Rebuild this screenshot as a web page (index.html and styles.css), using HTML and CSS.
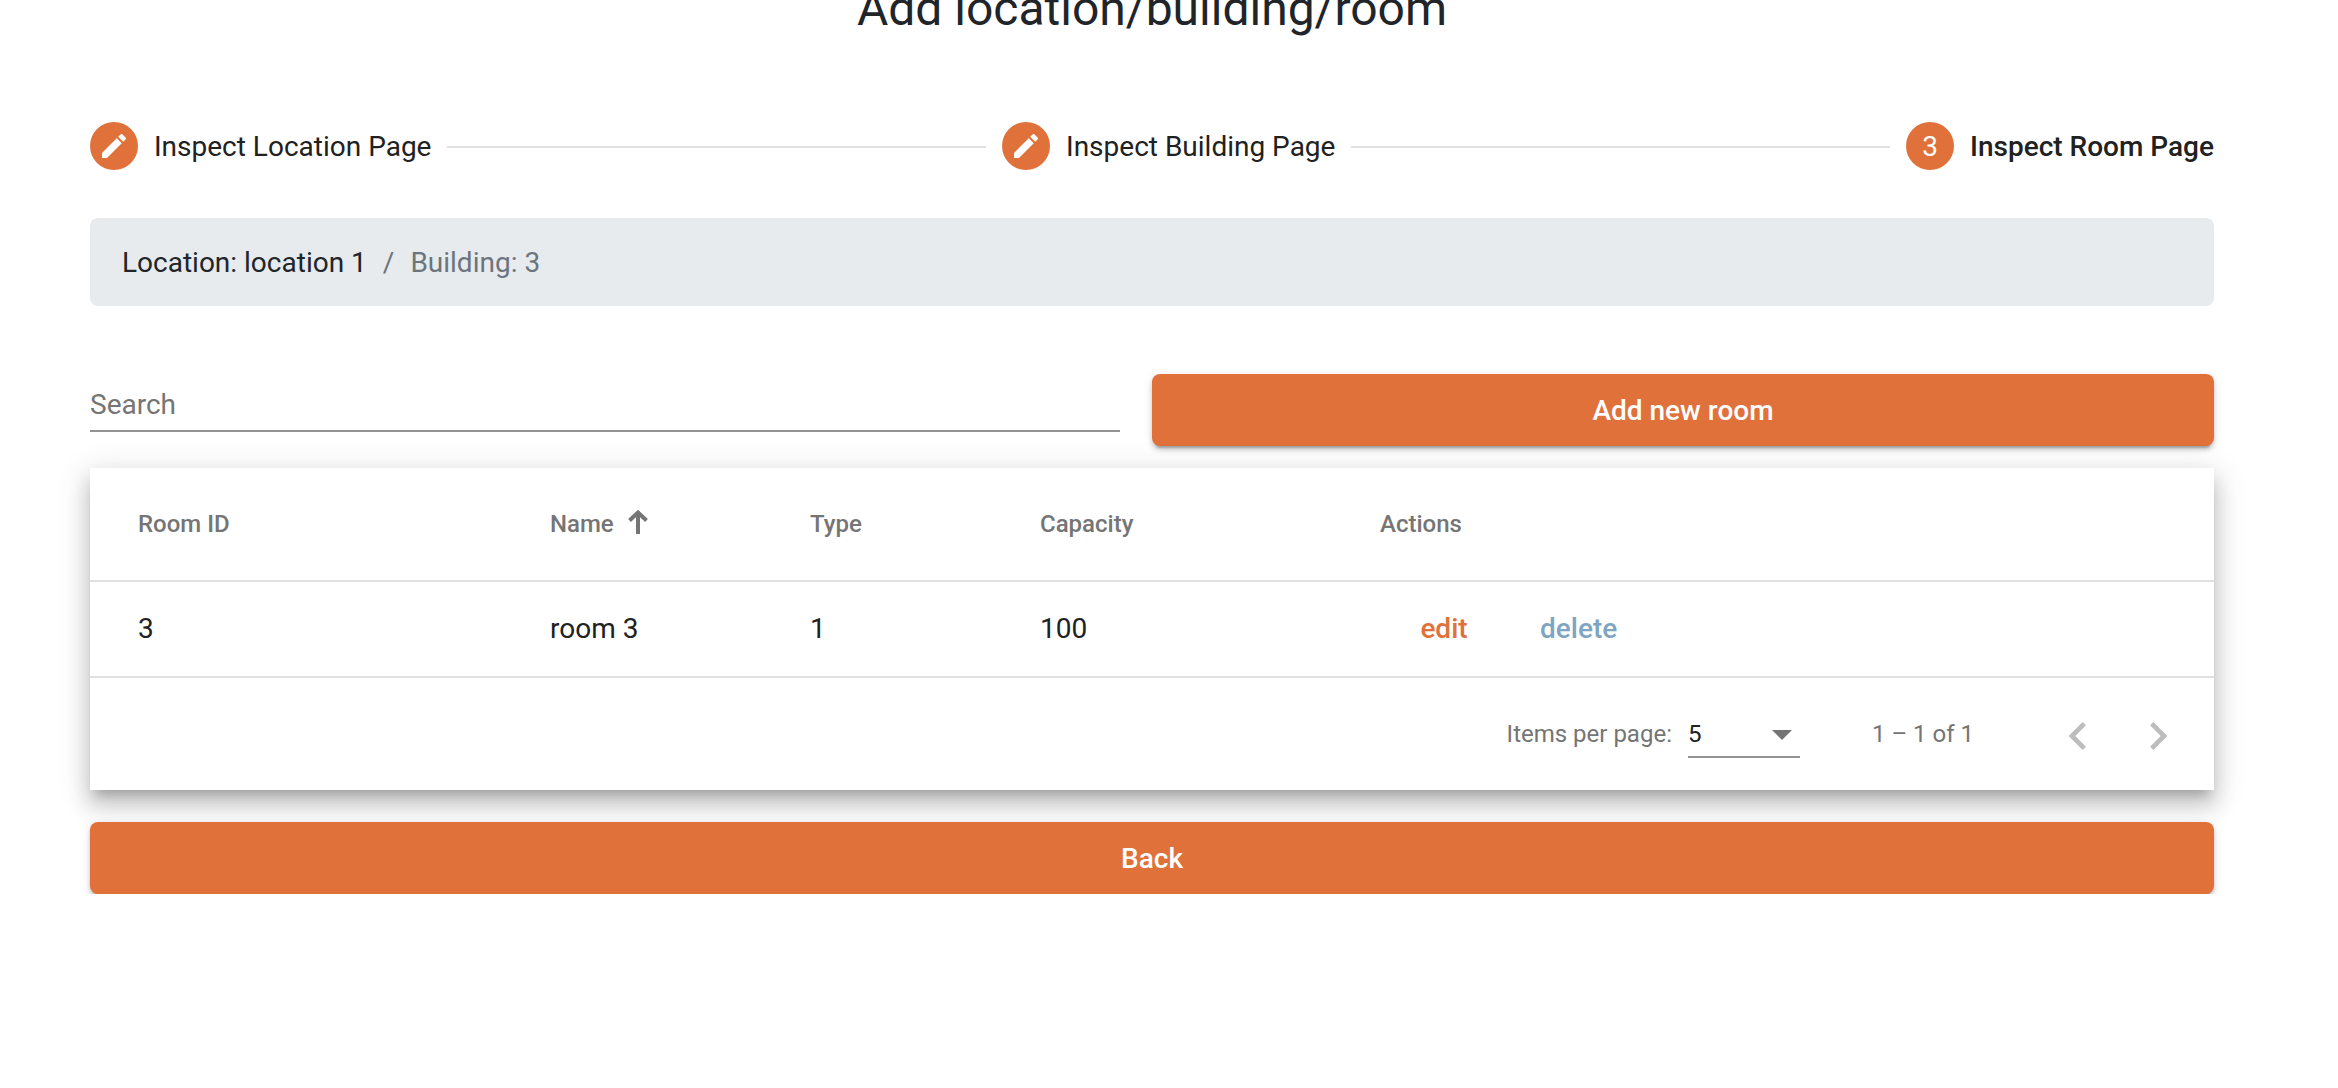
FILE: index.html
```html
<!DOCTYPE html>
<html lang="en">
<head>
  <meta charset="utf-8">
  <meta name="viewport" content="width=device-width, initial-scale=1">
  <title>Add location/building/room</title>
  <link rel="stylesheet" href="styles.css">
</head>
<body>
  <main class="page">
    <h1 class="page-title">Add location/building/room</h1>

    <ol class="stepper">
      <li class="step">
        <span class="step-icon">
          <svg viewBox="0 0 24 24" width="32" height="32" aria-hidden="true"><path d="M3 17.25V21h3.75L17.81 9.94l-3.75-3.75L3 17.25zM20.71 7.04c.39-.39.39-1.02 0-1.41l-2.34-2.34c-.39-.39-1.02-.39-1.41 0l-1.83 1.83 3.75 3.75 1.83-1.83z"/></svg>
        </span>
        <span class="step-label">Inspect Location Page</span>
      </li>
      <li class="step-line" role="presentation"></li>
      <li class="step">
        <span class="step-icon">
          <svg viewBox="0 0 24 24" width="32" height="32" aria-hidden="true"><path d="M3 17.25V21h3.75L17.81 9.94l-3.75-3.75L3 17.25zM20.71 7.04c.39-.39.39-1.02 0-1.41l-2.34-2.34c-.39-.39-1.02-.39-1.41 0l-1.83 1.83 3.75 3.75 1.83-1.83z"/></svg>
        </span>
        <span class="step-label">Inspect Building Page</span>
      </li>
      <li class="step-line" role="presentation"></li>
      <li class="step step-current" aria-current="step">
        <span class="step-icon"><span class="step-number">3</span></span>
        <span class="step-label">Inspect Room Page</span>
      </li>
    </ol>

    <nav class="breadcrumb" aria-label="Breadcrumb">
      <a class="crumb" href="#location">Location: location 1</a>
      <span class="crumb-separator">/</span>
      <span class="crumb-current">Building: 3</span>
    </nav>

    <div class="toolbar">
      <input class="search" type="search" placeholder="Search" aria-label="Search">
      <button class="button" type="button">Add new room</button>
    </div>

    <section class="card">
      <table class="rooms">
        <colgroup>
          <col class="col-id">
          <col class="col-name">
          <col class="col-type">
          <col class="col-capacity">
          <col>
        </colgroup>
        <thead>
          <tr>
            <th scope="col">Room ID</th>
            <th scope="col" aria-sort="ascending">
              <span class="sorted">Name
                <svg viewBox="0 0 24 24" width="24" height="24" aria-hidden="true"><path d="M12 24V3M3.500 10.500l8.500-8 8.500 8"/></svg>
              </span>
            </th>
            <th scope="col">Type</th>
            <th scope="col">Capacity</th>
            <th scope="col">Actions</th>
          </tr>
        </thead>
        <tbody>
          <tr>
            <td>3</td>
            <td>room 3</td>
            <td>1</td>
            <td>100</td>
            <td>
              <div class="actions">
                <button class="action action-edit" type="button">edit</button>
                <button class="action action-delete" type="button">delete</button>
              </div>
            </td>
          </tr>
        </tbody>
      </table>

      <div class="paginator">
        <label class="page-size-label" for="page-size">Items per page:</label>
        <div class="page-size">
          <select class="page-size-select" id="page-size">
            <option>5</option>
            <option>10</option>
            <option>20</option>
          </select>
          <svg class="page-size-arrow" viewBox="0 0 20 10" width="20" height="10" aria-hidden="true"><path d="M0 0h20L10 10z"/></svg>
        </div>
        <span class="range">1 – 1 of 1</span>
        <button class="page-button" type="button" aria-label="Previous page" disabled>
          <svg viewBox="0 0 24 24" width="56" height="56" aria-hidden="true"><path d="M15.41 7.41L14 6l-6 6 6 6 1.41-1.41L10.83 12z"/></svg>
        </button>
        <button class="page-button" type="button" aria-label="Next page" disabled>
          <svg viewBox="0 0 24 24" width="56" height="56" aria-hidden="true"><path d="M10 6L8.59 7.41 13.17 12l-4.58 4.59L10 18l6-6z"/></svg>
        </button>
      </div>
    </section>

    <button class="button" type="button">Back</button>
  </main>
</body>
</html>
```

FILE: styles.css
```css
:root {
  --accent: #e0713a;
  --text: #212121;
  --muted: #757575;
  --divider: #e0e0e0;
  --underline: #949494;
}

* {
  box-sizing: border-box;
}

body {
  margin: 0;
  background: #fff;
  color: var(--text);
  font-family: Roboto, "Liberation Sans", sans-serif;
  font-size: 28px;
  line-height: 40px;
}

button,
input,
select {
  font: inherit;
}

.page {
  display: flex;
  flex-direction: column;
  padding: 0 124px 0 90px;
}

.page-title {
  margin: -19px 0 85px;
  color: #212529;
  font-size: 48px;
  font-weight: 400;
  line-height: 56px;
  text-align: center;
}

.stepper {
  display: flex;
  align-items: center;
  gap: 16px;
  margin: 0 0 48px;
  padding: 0;
  list-style: none;
}

.step {
  display: flex;
  align-items: center;
  gap: 16px;
}

.step-icon {
  display: flex;
  align-items: center;
  justify-content: center;
  width: 48px;
  height: 48px;
  border-radius: 50%;
  background: var(--accent);
  color: #fff;
}

.step-icon svg {
  fill: #fff;
}

.step-label,
.step-number {
  padding-top: 2px;
}

.step-current .step-label {
  font-weight: 500;
}

.step-line {
  flex: 1;
  margin-top: 2px;
  border-top: 2px solid var(--divider);
}

.breadcrumb {
  display: flex;
  gap: 16px;
  margin-bottom: 68px;
  padding: 25px 32px 23px;
  border-radius: 8px;
  background: #e7ebee;
  color: #6c757d;
}

.crumb {
  color: #212529;
  text-decoration: none;
}

.toolbar {
  display: grid;
  grid-template-columns: 1fr 1fr;
  align-items: start;
  margin-bottom: 22px;
}

.search {
  height: 58px;
  margin-right: 32px;
  padding: 4px 0 0;
  border: 0;
  border-bottom: 2px solid var(--underline);
  border-radius: 0;
  outline: 0;
  background: none;
  appearance: none;
}

.search::placeholder {
  color: var(--muted);
  opacity: 1;
}

.button {
  height: 72px;
  padding: 2px 32px 0;
  border: 0;
  border-radius: 8px;
  background: var(--accent);
  box-shadow:
    0 6px 2px -4px rgba(0, 0, 0, 0.2),
    0 4px 4px 0 rgba(0, 0, 0, 0.14),
    0 2px 10px 0 rgba(0, 0, 0, 0.12);
  color: #fff;
  font-weight: 500;
}

.card {
  margin-bottom: 32px;
  background: #fff;
  box-shadow:
    0 10px 10px -6px rgba(0, 0, 0, 0.2),
    0 16px 20px 2px rgba(0, 0, 0, 0.14),
    0 6px 28px 4px rgba(0, 0, 0, 0.12);
}

.rooms {
  width: 100%;
  border-collapse: separate;
  border-spacing: 0;
  table-layout: fixed;
}

.col-id {
  width: 460px;
}

.col-name {
  width: 260px;
}

.col-type {
  width: 230px;
}

.col-capacity {
  width: 340px;
}

.rooms th,
.rooms td {
  padding: 0;
  border-bottom: 2px solid var(--divider);
  text-align: left;
}

.rooms th {
  height: 114px;
  color: var(--muted);
  font-size: 24px;
  font-weight: 500;
}

.rooms td {
  height: 96px;
}

.rooms th:first-child,
.rooms td:first-child {
  padding-left: 48px;
}

.sorted {
  display: flex;
  align-items: center;
  gap: 12px;
}

.sorted svg {
  margin-bottom: 4px;
  fill: none;
  stroke: var(--muted);
  stroke-width: 4;
}

.actions {
  display: flex;
}

.action {
  min-width: 128px;
  height: 72px;
  padding: 0 32px;
  border: 0;
  background: none;
  font-weight: 500;
}

.action-edit {
  color: var(--accent);
}

.action-delete {
  color: #7fa5c3;
}

.paginator {
  display: flex;
  align-items: center;
  justify-content: flex-end;
  height: 112px;
  padding: 0 16px;
  color: var(--muted);
  font-size: 24px;
}

.page-size {
  position: relative;
  margin: 0 72px 0 16px;
}

.page-size-select {
  display: block;
  width: 112px;
  height: 48px;
  padding: 2px 0 0;
  border: 0;
  border-bottom: 2px solid var(--underline);
  border-radius: 0;
  background: none;
  color: var(--text);
  appearance: none;
}

.page-size-arrow {
  position: absolute;
  top: 20px;
  right: 8px;
  fill: var(--muted);
  pointer-events: none;
}

.range {
  margin-right: 64px;
}

.page-button {
  width: 80px;
  height: 80px;
  padding: 14px 12px 10px;
  border: 0;
  background: none;
}

.page-button svg {
  display: block;
  fill: #bdbdbd;
}
```
